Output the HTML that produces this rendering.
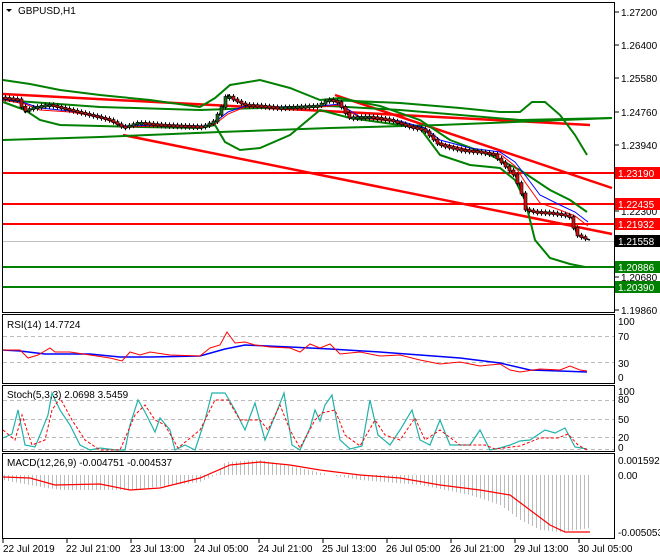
<!DOCTYPE html>
<html><head><meta charset="utf-8"><style>
html,body{margin:0;padding:0;background:#fff;}
svg{display:block;font-family:"Liberation Sans",sans-serif;font-size:10px;}
</style></head><body>
<svg id="s" width="660" height="560" viewBox="0 0 660 560" xmlns="http://www.w3.org/2000/svg">
<rect width="660" height="560" fill="#fff"/>
<!-- panel frames -->
<g fill="none" stroke="#000" stroke-width="1">
<rect x="2.5" y="2.5" width="612" height="310"/>
<rect x="2.5" y="314.5" width="612" height="69"/>
<rect x="2.5" y="385.5" width="612" height="66"/>
<rect x="2.5" y="453.5" width="612" height="85"/>
</g>
<!-- grid dashed lines in indicators -->
<g stroke="#bbb" stroke-dasharray="4,3" stroke-width="1">
<line x1="3" y1="336.5" x2="614" y2="336.5"/><line x1="3" y1="362.5" x2="614" y2="362.5"/>
<line x1="3" y1="400.5" x2="614" y2="400.5"/><line x1="3" y1="419.5" x2="614" y2="419.5"/><line x1="3" y1="437.5" x2="614" y2="437.5"/><line x1="3" y1="449.5" x2="614" y2="449.5"/>
</g>
<!-- horizontal levels -->
<line x1="3" y1="241.5" x2="614" y2="241.5" stroke="#c0c0c0"/>
<g stroke="#ff0000" stroke-width="2">
<line x1="3" y1="173" x2="614" y2="173"/><line x1="3" y1="204" x2="614" y2="204"/><line x1="3" y1="224" x2="614" y2="224"/>
</g>
<g stroke="#008000" stroke-width="2">
<line x1="3" y1="267" x2="614" y2="267"/><line x1="3" y1="287" x2="614" y2="287"/>
</g>
<!-- red trendlines -->
<g stroke="#ff0000" stroke-width="2.5" fill="none">
<line x1="3" y1="94" x2="590" y2="125"/>
<line x1="123" y1="135" x2="612" y2="234"/>
<line x1="335" y1="95" x2="612" y2="188"/>
</g>
<!-- green bands -->
<g stroke="#008000" stroke-width="2" fill="none">
<polyline points="3,80 30,84 60,90 100,95 120,97 150,100 200,107 215,98 230,85 260,80 290,88 320,100 340,98 380,106 420,120 450,140 490,155 520,170 550,190 570,200 587,212"/>
<polyline points="3,102 25,110 40,120 60,125 100,126 140,127 200,128 215,125 225,142 240,150 260,148 290,135 320,110 350,118 400,125 420,128 440,155 470,165 500,168 515,180 525,200 535,240 550,258 570,264 585,267"/>
<polyline points="3,140 100,137 220,132 330,128 440,125 612,118"/>
<polyline points="3,100 100,107 200,110 260,108 330,106 400,110 460,115 520,120 612,118"/>
<polyline points="330,100 400,103 460,108 500,112 520,112 532,102 545,102 560,115 575,135 587,155"/>
</g>
<!-- moving averages -->
<polyline fill="none" stroke="#0000ff" stroke-width="1" points="3,99 25,103 40,108 70,111 100,116 125,126 160,125 205,126 215,122 228,112 245,106 280,107 320,106 340,104 360,117 400,121 425,128 440,140 470,148 500,152 515,162 525,175 540,195 560,205 575,212 588,222"/>
<polyline fill="none" stroke="#ff0000" stroke-width="1" points="3,100 25,104 40,110 70,112 100,117 125,127 160,126 205,127 215,124 228,114 245,107 280,108 320,107 340,105 360,118 400,122 425,130 440,143 470,150 500,154 515,166 525,182 540,203 560,210 575,216 588,226"/>
<!-- price path -->
<polyline id="price" fill="none" stroke="#000" stroke-width="1.5" points="3,98 20,100 25,112 35,108 50,105 70,110 90,115 110,120 125,128 140,123 160,125 180,126 205,127 215,122 222,110 228,95 235,100 245,105 260,106 280,108 300,107 320,106 330,100 340,103 350,118 370,117 390,120 410,127 425,130 440,145 460,150 480,152 495,155 505,165 515,175 522,190 527,210 535,212 550,213 565,215 572,218 577,235 584,238 590,240"/>
<g id="candles"></g>
<!-- price labels -->
<g fill="#000">
<text x="621" y="16">1.27200</text><text x="621" y="49">1.26400</text><text x="621" y="82">1.25580</text><text x="621" y="116">1.24760</text><text x="621" y="149">1.23940</text><text x="621" y="215">1.22300</text><text x="621" y="281">1.20680</text><text x="621" y="314">1.19860</text>
</g>
<rect x="615" y="167" width="45" height="12" fill="#ff0000"/><text x="618" y="177" fill="#fff">1.23190</text>
<rect x="615" y="198" width="45" height="12" fill="#ff0000"/><text x="618" y="208" fill="#fff">1.22435</text>
<rect x="615" y="218" width="45" height="12" fill="#ff0000"/><text x="618" y="228" fill="#fff">1.21932</text>
<rect x="615" y="235" width="45" height="12" fill="#000"/><text x="618" y="245" fill="#fff">1.21558</text>
<rect x="615" y="261" width="45" height="12" fill="#008000"/><text x="618" y="271" fill="#fff">1.20886</text>
<rect x="615" y="281" width="45" height="12" fill="#008000"/><text x="618" y="291" fill="#fff">1.20390</text>
<g stroke="#000"><line x1="615" y1="12" x2="619" y2="12"/><line x1="615" y1="45" x2="619" y2="45"/><line x1="615" y1="78" x2="619" y2="78"/><line x1="615" y1="112" x2="619" y2="112"/><line x1="615" y1="145" x2="619" y2="145"/><line x1="615" y1="211" x2="619" y2="211"/><line x1="615" y1="277" x2="619" y2="277"/><line x1="615" y1="310" x2="619" y2="310"/></g>
<polygon points="6,9 12,9 9,12" fill="#000"/>
<text x="18" y="14" fill="#000">GBPUSD,H1</text>
<!-- RSI -->
<text x="7" y="328">RSI(14) 14.7724</text>
<polyline fill="none" stroke="#0000ff" stroke-width="1.5" points="3,350 20,351 45,354 90,354 120,357 150,357 200,356 225,349 245,345 290,347 330,349 380,352 420,355 460,358 500,363 530,370 560,371 587,372"/>
<polyline fill="none" stroke="#ff0000" stroke-width="1" points="3,350 20,350 28,358 38,355 50,348 55,352 70,352 90,355 110,358 122,361 130,352 140,355 150,352 170,355 200,356 210,348 220,345 227,332 235,343 245,342 255,345 270,347 290,348 300,352 310,344 320,348 330,344 340,354 360,352 380,356 400,355 420,360 440,364 460,362 480,366 500,364 510,370 520,372 540,369 560,370 570,366 580,370 587,371"/>
<g fill="#000"><text x="618" y="325">100</text><text x="618" y="340">70</text><text x="618" y="367">30</text><text x="618" y="381">0</text></g>
<!-- Stoch -->
<polyline fill="none" stroke="#20b2aa" stroke-width="1.2" points="3,438 12,434 18,410 25,445 35,447 40,435 48,415 52,393 60,410 70,425 80,445 90,450 100,448 116,450 125,450 130,425 138,400 145,412 155,432 160,418 170,430 175,450 185,445 195,450 205,420 212,393 225,393 235,410 245,430 255,403 265,440 275,416 284,393 292,445 300,450 310,428 315,410 320,421 325,405 332,395 340,440 350,449 362,446 370,400 378,435 390,445 400,430 412,410 420,440 430,445 440,420 450,445 470,445 480,430 490,450 500,448 510,445 520,441 530,440 545,430 555,433 565,428 575,447 587,449"/>
<polyline fill="none" stroke="#ff0000" stroke-width="1" stroke-dasharray="3,2" points="3,430 15,440 22,415 32,445 45,440 52,410 60,398 72,420 85,440 100,450 120,450 135,415 145,405 155,420 165,425 178,448 200,430 215,400 228,400 240,420 250,420 260,420 268,430 280,405 290,430 300,448 315,420 322,413 335,410 345,435 360,446 375,420 385,435 400,440 415,418 425,440 440,430 460,445 485,445 495,449 520,446 540,438 558,438 568,434 578,445 587,450"/>
<text x="7" y="398">Stoch(5,3,3) 2.0698 3.5459</text>
<g fill="#000"><text x="618" y="395">100</text><text x="618" y="403">80</text><text x="618" y="423">50</text><text x="618" y="441">20</text><text x="618" y="451">0</text></g>
<!-- MACD -->
<g id="hist" stroke="#bbb" stroke-width="1"></g>
<polyline fill="none" stroke="#ff0000" stroke-width="1.2" points="3,477 30,478 55,485 100,484 130,490 160,488 200,478 230,465 260,462 290,465 320,470 360,475 400,478 440,485 480,490 510,495 530,510 550,525 565,532 590,532"/>
<text x="7" y="466">MACD(12,26,9) -0.004751 -0.004537</text>
<g fill="#000"><text x="618" y="464">0.001592</text><text x="618" y="479">0.00</text><text x="618" y="536">-0.005053</text></g>
<!-- time axis -->
<g stroke="#000"><line x1="3" y1="539" x2="3" y2="543"/><line x1="67" y1="539" x2="67" y2="543"/><line x1="131" y1="539" x2="131" y2="543"/><line x1="195" y1="539" x2="195" y2="543"/><line x1="259" y1="539" x2="259" y2="543"/><line x1="323" y1="539" x2="323" y2="543"/><line x1="387" y1="539" x2="387" y2="543"/><line x1="451" y1="539" x2="451" y2="543"/><line x1="515" y1="539" x2="515" y2="543"/><line x1="579" y1="539" x2="579" y2="543"/></g>
<g fill="#000"><text x="3" y="552">22 Jul 2019</text><text x="66" y="552">22 Jul 21:00</text><text x="130" y="552">23 Jul 13:00</text><text x="194" y="552">24 Jul 05:00</text><text x="258" y="552">24 Jul 21:00</text><text x="322" y="552">25 Jul 13:00</text><text x="386" y="552">26 Jul 05:00</text><text x="450" y="552">26 Jul 21:00</text><text x="514" y="552">29 Jul 13:00</text><text x="578" y="552">30 Jul 05:00</text></g>
</svg>
<script>
(function(){
var ns="http://www.w3.org/2000/svg";
var kp=[[3,480],[40,487],[60,490],[130,490],[200,482],[215,475],[225,462],[260,460],[300,468],[330,475],[360,480],[420,485],[470,495],[500,505],[520,520],[540,530],[560,532],[590,528]];
function f(x){for(var i=1;i<kp.length;i++){if(x<=kp[i][0]){var a=kp[i-1],b=kp[i];return a[1]+(b[1]-a[1])*(x-a[0])/(b[0]-a[0]);}}return kp[kp.length-1][1];}
var g=document.getElementById("hist");
for(var x=4;x<=590;x+=4){var y=f(x);if(Math.abs(y-475)<1)continue;var l=document.createElementNS(ns,"line");l.setAttribute("x1",x+.5);l.setAttribute("x2",x+.5);l.setAttribute("y1",475);l.setAttribute("y2",y);g.appendChild(l);}
var pts=document.getElementById("price").getAttribute("points").trim().split(/\s+/).map(function(p){return p.split(",").map(Number);});
function py(x){for(var i=1;i<pts.length;i++){if(x<=pts[i][0]){var a=pts[i-1],b=pts[i];return a[1]+(b[1]-a[1])*(x-a[0])/(b[0]-a[0]);}}return pts[pts.length-1][1];}
var c=document.getElementById("candles");
for(var x=5;x<=588;x+=4){var y0=py(x-2),y1=py(x+2);var t=Math.min(y0,y1)-1,h=Math.max(Math.abs(y1-y0),1.5);
var w=document.createElementNS(ns,"line");w.setAttribute("x1",x+.5);w.setAttribute("x2",x+.5);w.setAttribute("y1",t-2);w.setAttribute("y2",t+h+3);w.setAttribute("stroke","#000");c.appendChild(w);
var r=document.createElementNS(ns,"rect");r.setAttribute("x",x-1);r.setAttribute("y",t);r.setAttribute("width",3);r.setAttribute("height",h+1);r.setAttribute("fill",y1>y0?"#d01010":"#1a6a1a");r.setAttribute("stroke","#000");r.setAttribute("stroke-width","0.6");c.appendChild(r);}
})();
</script>
</body></html>
